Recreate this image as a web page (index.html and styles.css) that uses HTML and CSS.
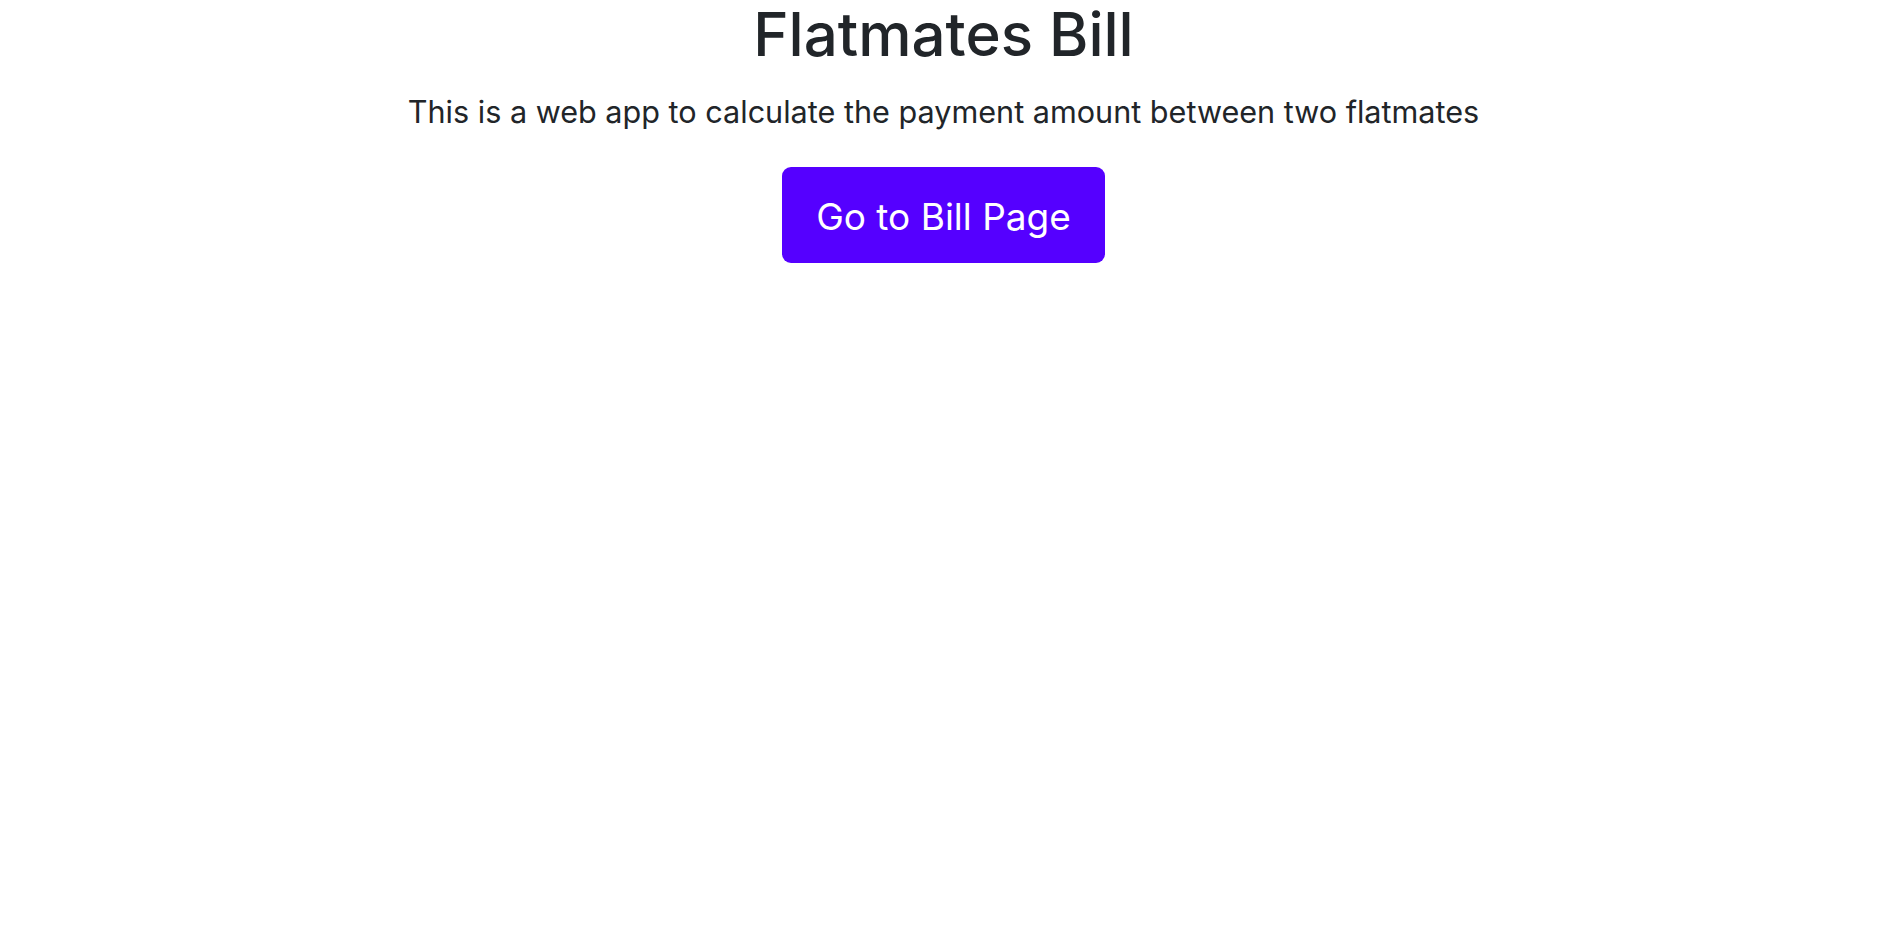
FILE: index.html
```html
<!DOCTYPE html>
<html lang="en">
<head>
<meta charset="utf-8">
<title>Flatmates Bill</title>
<link rel="stylesheet" href="styles.css">
</head>
<body>
<main class="hero">
  <h1 class="title">Flatmates Bill</h1>
  <p class="lead">This is a web app to calculate the payment amount between two flatmates</p>
  <a class="btn" href="#">Go to Bill Page</a>
</main>
</body>
</html>
```

FILE: styles.css
```css
html, body {
  margin: 0;
  padding: 0;
  background: #ffffff;
}
body {
  font-family: Inter, "Noto Sans", "Liberation Sans", sans-serif;
  color: #212529;
}
.hero {
  display: flex;
  flex-direction: column;
  align-items: center;
  text-align: center;
  padding-top: 1px;
  padding-left: 7px;
}
.title {
  margin: 0 0 22px;
  font-size: 60px;
  font-weight: 500;
  line-height: 1.1;
}
.lead {
  margin: 0 0 33px;
  font-size: 30.6px;
  font-weight: 400;
  line-height: 45px;
}
.btn {
  display: inline-block;
  background: #5500ff;
  color: #ffffff;
  text-decoration: none;
  font-size: 37px;
  line-height: 57px;
  padding: 21px 34px 18px;
  border-radius: 9px;
}
```
